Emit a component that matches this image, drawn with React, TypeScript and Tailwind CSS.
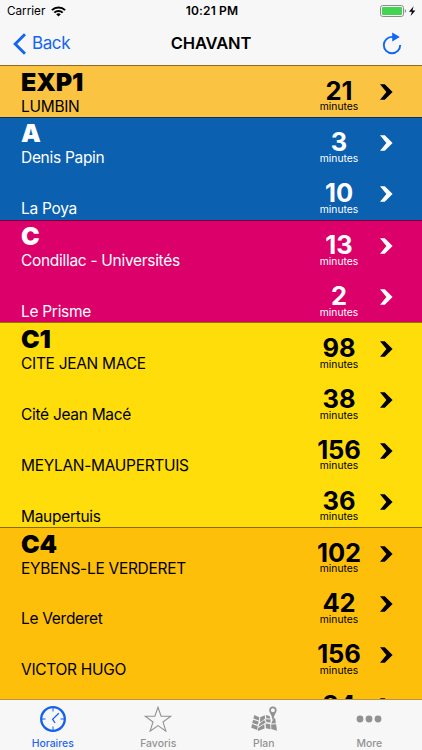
import clsx from "clsx";

interface Departure {
  destination: string;
  minutes: number;
}

interface Line {
  name: string;
  color: string;
  departures: Departure[];
}

const lines: Line[] = [
  {
    name: "EXP1",
    color: "bg-[#fbc342] text-black",
    departures: [{ destination: "LUMBIN", minutes: 21 }],
  },
  {
    name: "A",
    color: "bg-[#0b60b0] text-white",
    departures: [
      { destination: "Denis Papin", minutes: 3 },
      { destination: "La Poya", minutes: 10 },
    ],
  },
  {
    name: "C",
    color: "bg-[#dc006b] text-white",
    departures: [
      { destination: "Condillac - Universités", minutes: 13 },
      { destination: "Le Prisme", minutes: 2 },
    ],
  },
  {
    name: "C1",
    color: "bg-[#fedd0a] text-black",
    departures: [
      { destination: "CITE JEAN MACE", minutes: 98 },
      { destination: "Cité Jean Macé", minutes: 38 },
      { destination: "MEYLAN-MAUPERTUIS", minutes: 156 },
      { destination: "Maupertuis", minutes: 36 },
    ],
  },
  {
    name: "C4",
    color: "bg-[#fdbf0a] text-black",
    departures: [
      { destination: "EYBENS-LE VERDERET", minutes: 102 },
      { destination: "Le Verderet", minutes: 42 },
      { destination: "VICTOR HUGO", minutes: 156 },
      { destination: "Victor Hugo", minutes: 34 },
    ],
  },
];

function WifiIcon() {
  return (
    <svg className="ml-[6px] h-[11px] w-[15px]" viewBox="0 0 15 11" fill="none" stroke="#000" strokeWidth="2">
      <path d="M0.9 4.1a9.4 9.4 0 0 1 13.2 0" />
      <path d="M3.3 6.6a6 6 0 0 1 8.4 0" />
      <path d="M7.5 10.6 5.2 8.3a3.3 3.3 0 0 1 4.6 0z" fill="#000" stroke="none" />
    </svg>
  );
}

function BatteryIcon() {
  return (
    <svg className="h-[14px] w-[36px]" viewBox="0 0 36 14" fill="none">
      <rect x="0.5" y="1.5" width="23" height="11" rx="2.2" stroke="#8c8c8c" />
      <rect x="2" y="3" width="20" height="8" rx="0.8" fill="#43d551" />
      <path d="M24.8 5.2c1 .3 1.3 1 1.3 1.8s-.3 1.5-1.3 1.8z" fill="#8c8c8c" />
      <path d="M33.600 2.200 29 7.700h2.900l-1.300 4.400L35.400 6.500h-3z" fill="#000" />
    </svg>
  );
}

function Chevron() {
  return (
    <svg className="h-4 w-[13px]" viewBox="0 0 13 16" fill="currentColor">
      <path d="M0 0.300h4.800L12.600 8 4.800 15.700H0L6.400 8z" />
    </svg>
  );
}

function ClockIcon() {
  return (
    <svg className="h-[26px] w-[26px]" viewBox="0 0 26 26" fill="none" stroke="#1360ee">
      <circle cx="13" cy="13" r="11.800" strokeWidth="2.300" />
      <path d="M13 2v3.500M13 20.500V24M2 13h3.500M20.500 13H24" strokeWidth="1" />
      <path d="M18.800 7.200 12.600 13.300l2.500 3.700" strokeWidth="1.300" />
    </svg>
  );
}

function StarIcon() {
  return (
    <svg className="h-[26px] w-[28px]" viewBox="0 0 28 26" fill="none" stroke="#929292" strokeWidth="1.100">
      <path d="M14 1.200 17.100 10.300H26.800L19 16l2.900 9.200L14 19.600l-7.900 5.600L9 16 1.200 10.300h9.700z" />
    </svg>
  );
}

function MapIcon() {
  return (
    <svg className="h-[26px] w-[26px]" viewBox="0 0 26 26" fill="#929292">
      <path d="M3.300 9 8.200 11.300 8 14.500 2.400 12.600zM2.100 13.700l5.600 1.900-.9 3.200L1.300 17zM1 18.100l5.700 1.900-.5 4L.3 21.800z" />
      <path d="M9.200 11.200l4.600-1.900.3 3.300-5 4zM14.900 9.100l3.600.9.900 2.500-4.100-.2zM8.300 18l4.800-3.900 1.600 2.400-7.200 4.300zM14.200 13.200l5.500.3-.5 3.200-3.600-.7zM7.100 22l6.100-3.700.4 4.200-6.700 2.600zM14.600 17.500l4.600.8.200 4.900-4.400-1z" />
      <path d="M20.200 17.500l2.500-5.400 1.500.5.700 4.600zM20.100 18.600l5-.3.900 6.500-5.700-1.900z" />
      <path
        fillRule="evenodd"
        d="M21.900.5a3.700 3.700 0 0 0-3.700 3.800c0 2.500 2.700 4.300 3.100 9.100h1.200c.4-4.800 3.100-6.600 3.100-9.100A3.700 3.700 0 0 0 21.900.5zm0 1.700a2 2 0 1 1 0 4 2 2 0 0 1 0-4z"
      />
    </svg>
  );
}

function MoreIcon() {
  return (
    <svg className="h-[26px] w-[26px]" viewBox="0 0 26 26" fill="#929292">
      <circle cx="4" cy="13" r="3.400" />
      <circle cx="13" cy="13" r="3.400" />
      <circle cx="22" cy="13" r="3.400" />
    </svg>
  );
}

const tabs = [
  { label: "Horaires", icon: <ClockIcon />, active: true },
  { label: "Favoris", icon: <StarIcon />, active: false },
  { label: "Plan", icon: <MapIcon />, active: false },
  { label: "More", icon: <MoreIcon />, active: false },
];

function LineSection({ line }: { line: Line }) {
  return (
    <section className={clsx("border-t border-black/45", line.color)}>
      {line.departures.map((departure, index) => (
        <div key={departure.destination} className="flex h-[50.900px] pl-[21px]">
          <div className="flex w-[288px] flex-col justify-end pb-[0.400px]">
            {index === 0 && (
              <h2 className="mb-[2px] text-[25px] leading-[25px] font-black tracking-[-0.100px]">{line.name}</h2>
            )}
            <p className="text-[15.500px] leading-[20px] tracking-[-0.300px] whitespace-nowrap">
              {departure.destination}
            </p>
          </div>
          <div className="flex w-[60px] flex-col items-center pt-[11.500px]">
            <span className="text-[25.500px] leading-[25px] font-bold tracking-[-0.100px]">{departure.minutes}</span>
            <span className="-mt-[1.300px] text-[10.300px] leading-[11px]">minutes</span>
          </div>
          <div className="pt-[17.500px] pl-[11px]">
            <Chevron />
          </div>
        </div>
      ))}
    </section>
  );
}

export default function App() {
  return (
    <div className="flex h-[750px] w-[422px] flex-col overflow-hidden bg-[#f7f7f7] font-['Inter','Liberation_Sans',sans-serif] text-black">
      {/* Status bar */}
      <div className="grid h-[22px] shrink-0 grid-cols-3 items-center px-[6px]">
        <div className="flex items-center pt-[1px] pl-[1px] text-[11.700px]">
          Carrier
          <WifiIcon />
        </div>
        <span className="pl-[2px] text-center text-[12px] font-semibold tracking-[0.150px]">10:21 PM</span>
        <div className="flex justify-end">
          <BatteryIcon />
        </div>
      </div>

      {/* Navigation bar */}
      <header className="grid h-[43px] shrink-0 grid-cols-3 items-center px-[13px]">
        <button className="flex items-center text-[17px] tracking-[-0.400px] text-[#1266f1]">
          <svg className="mr-[6px] h-[22px] w-[13px]" viewBox="0 0 13 22" fill="none" stroke="currentColor" strokeWidth="2.900">
            <path d="M12 1.200 2.200 11 12 20.800" />
          </svg>
          Back
        </button>
        <h1 className="text-center text-[16.500px] font-semibold tracking-[-0.150px]">CHAVANT</h1>
        <button className="flex justify-end pr-[7px] text-[#1266f1]">
          <svg className="h-[23px] w-[20px]" viewBox="0 0 20 23" fill="none">
            <path d="M11 4.900H10A8.200 8.200 0 1 0 18.200 13.100" stroke="currentColor" strokeWidth="1.900" />
            <path d="M10.200.500 17.800 4.900l-7.600 4.500z" fill="currentColor" />
          </svg>
        </button>
      </header>

      {/* Departures, cut off by the tab bar */}
      <main className="min-h-0 flex-1 overflow-hidden">
        {lines.map((line) => (
          <LineSection key={line.name} line={line} />
        ))}
      </main>

      {/* Tab bar */}
      <nav className="grid h-[51px] shrink-0 grid-cols-4 border-t border-[#b79540] bg-[#f7f7f7]">
        {tabs.map((tab) => (
          <button
            key={tab.label}
            className={clsx(
              "flex flex-col items-center pt-[6px] text-[10.400px] leading-[13px] font-medium",
              tab.active ? "text-[#1f68f0]" : "text-[#929292]"
            )}
          >
            {tab.icon}
            <span className="mt-[5px]">{tab.label}</span>
          </button>
        ))}
      </nav>
    </div>
  );
}
